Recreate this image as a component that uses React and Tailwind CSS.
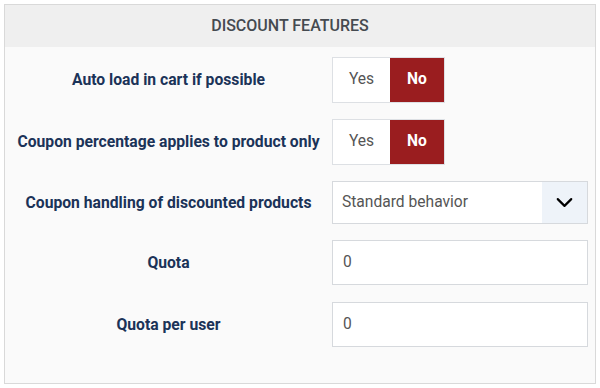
import { ChevronDown } from "lucide-react";

function Label({ children }) {
  return (
    <div className="w-[327px] shrink-0 text-center text-[15.7px] font-bold text-[#1b3358]">
      {children}
    </div>
  );
}

function Toggle() {
  return (
    <div className="flex h-[46px] border border-[#dde0e4] text-[15.6px]">
      <button className="w-[57px] bg-white text-[#555]">Yes</button>
      <button className="w-[54px] bg-[#9a1d1f] font-bold text-white">No</button>
    </div>
  );
}

function TextInput({ value }) {
  return (
    <div className="flex h-[45px] w-[256px] items-center border border-[#d6d9dd] bg-white px-[10px] text-[15.6px] text-[#555]">
      {value}
    </div>
  );
}

export default function App() {
  return (
    <div className="h-[388px] w-[600px] bg-white p-[4px] font-['Roboto',sans-serif]">
      <div className="flex h-[380px] flex-col border border-[#d9d9d9] bg-[#fafafa]">
        <div className="flex h-[42px] items-center justify-center bg-[#efefef] pr-[20px] text-[16px] font-medium text-[#454a50]">
          DISCOUNT FEATURES
        </div>

        <div className="flex flex-col pt-[10px]">
          <div className="flex items-center">
            <Label>Auto load in cart if possible</Label>
            <Toggle />
          </div>

          <div className="mt-[16px] flex items-center">
            <Label>Coupon percentage applies to product only</Label>
            <Toggle />
          </div>

          <div className="mt-[16px] flex items-center">
            <Label>Coupon handling of discounted products</Label>
            <div className="flex h-[43px] w-[256px] border border-[#d6d9dd] bg-white text-[15.6px] text-[#555]">
              <div className="flex flex-1 items-center px-[9px]">Standard behavior</div>
              <div className="flex w-[45px] items-center justify-center bg-[#eef3f9] text-black">
                <ChevronDown size={27} strokeWidth={1.9} />
              </div>
            </div>
          </div>

          <div className="mt-[16px] flex items-center">
            <Label>Quota</Label>
            <TextInput value="0" />
          </div>

          <div className="mt-[17px] flex items-center">
            <Label>Quota per user</Label>
            <TextInput value="0" />
          </div>
        </div>
      </div>
    </div>
  );
}
